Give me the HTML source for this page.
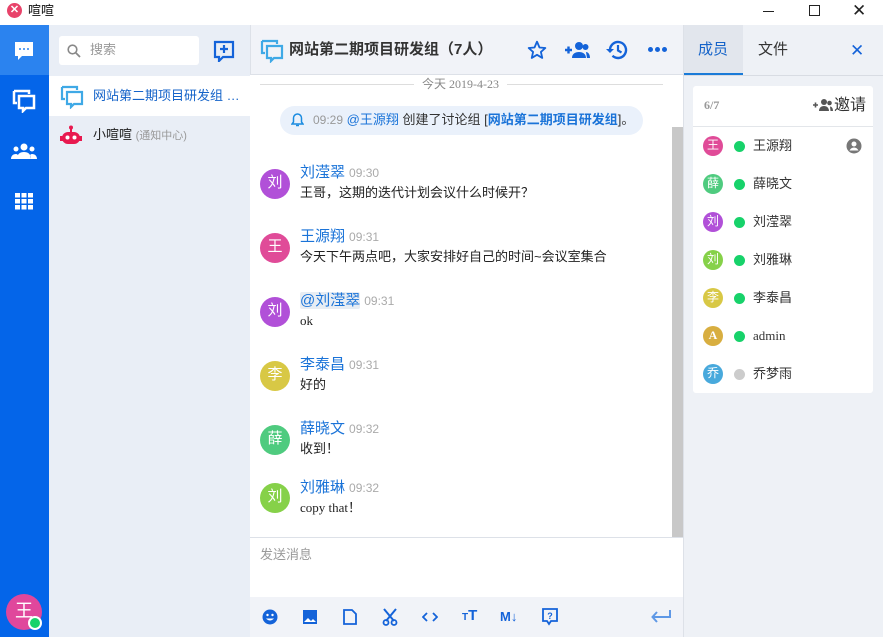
<!DOCTYPE html>
<html><head><meta charset="utf-8"><style>
*{margin:0;padding:0;box-sizing:border-box}
body{width:883px;height:637px;overflow:hidden;font-family:"Liberation Sans","Noto Sans CJK SC",sans-serif;font-size:13px;color:#333;background:#fff;position:relative}
.a{position:absolute}
.av{position:absolute;width:30px;height:30px;border-radius:50%;color:#fff;text-align:center;line-height:28px;font-size:15px}
.nm{position:absolute;left:300px;color:#1a73d8;font-size:15px;line-height:18px}
.tm{color:#aaa;font-size:12px;margin-left:4px}
.tx{position:absolute;left:300px;font-size:13px;color:#222;line-height:16px}
.mem{position:absolute;left:703px;height:20px;width:170px}
.mem .c{position:absolute;left:0;top:0;width:20px;height:20px;border-radius:50%;color:#fff;font-size:12px;text-align:center;line-height:19px}
.mem .d{position:absolute;left:31px;top:5px;width:11px;height:11px;border-radius:50%;background:#17d26a}
.mem .n{position:absolute;left:50px;top:2px;font-size:13px;color:#333;line-height:16px}
</style></head><body>
<div class="a" style="left:0;top:0;width:883px;height:25px;background:#fff"></div>
<div class="a" style="left:7px;top:3px;width:15px;height:15px;border-radius:50%;background:#e8436a;color:#fff;font-size:11px;line-height:15px;text-align:center;font-weight:bold">✕</div>
<div class="a" style="left:28px;top:3px;font-size:13px;color:#111;line-height:15px">喧喧</div>
<div class="a" style="left:763px;top:11px;width:11px;height:1px;background:#222"></div>
<div class="a" style="left:809px;top:5px;width:11px;height:11px;border:1px solid #222"></div>
<div class="a" style="left:852px;top:1px;font-size:17px;color:#222;line-height:19px">✕</div>
<div class="a" style="left:0;top:25px;width:49px;height:612px;background:#0465e9"></div>
<div class="a" style="left:0;top:25px;width:49px;height:50px;background:#2b83ef"></div>
<svg class="a" style="left:13px;top:40px" width="22" height="22" viewBox="0 0 22 22"><path d="M2 2h18v14H9l-4 4v-4H2z" fill="#fff"/><circle cx="7" cy="9" r="1" fill="#2b83ef"/><circle cx="11" cy="9" r="1" fill="#2b83ef"/><circle cx="15" cy="9" r="1" fill="#2b83ef"/></svg>
<svg class="a" style="left:12px;top:89px" width="24" height="24" viewBox="0 0 24 24"><path d="M2 2h15v3" fill="none" stroke="#fff" stroke-width="2.5"/><path d="M2 2v12h3" fill="none" stroke="#fff" stroke-width="2.5"/><path d="M7 7h15v12h-8l-3 3v-3H7z" fill="none" stroke="#fff" stroke-width="2.5"/></svg>
<svg class="a" style="left:11px;top:142px" width="26" height="18" viewBox="0 0 26 18"><circle cx="13" cy="5" r="3.5" fill="#fff"/><circle cx="5" cy="7" r="2.5" fill="#fff"/><circle cx="21" cy="7" r="2.5" fill="#fff"/><path d="M6 17c0-5 3-7 7-7s7 2 7 7z M0 17c0-3 2-5 5-5 1 0 2 1 2 1l-1 4z M26 17c0-3-2-5-5-5-1 0-2 1-2 1l1 4z" fill="#fff"/></svg>
<svg class="a" style="left:15px;top:193px" width="18" height="17" viewBox="0 0 18 17"><g fill="#fff"><rect x="0" y="0" width="5" height="4.5"/><rect x="6.5" y="0" width="5" height="4.5"/><rect x="13" y="0" width="5" height="4.5"/><rect x="0" y="6" width="5" height="4.5"/><rect x="6.5" y="6" width="5" height="4.5"/><rect x="13" y="6" width="5" height="4.5"/><rect x="0" y="12" width="5" height="4.5"/><rect x="6.5" y="12" width="5" height="4.5"/><rect x="13" y="12" width="5" height="4.5"/></g></svg>
<div class="a" style="left:6px;top:594px;width:36px;height:36px;border-radius:50%;background:#e0479c;color:#fff;font-size:18px;text-align:center;line-height:34px">王</div>
<div class="a" style="left:28px;top:616px;width:14px;height:14px;border-radius:50%;background:#17d26a;border:2px solid #fff"></div>
<div class="a" style="left:49px;top:25px;width:201px;height:612px;background:#e9eef6"></div>
<div class="a" style="left:59px;top:36px;width:140px;height:29px;background:#fff;border-radius:3px"></div>
<svg class="a" style="left:67px;top:44px" width="14" height="14" viewBox="0 0 14 14"><circle cx="5.5" cy="5.5" r="4.3" fill="none" stroke="#888" stroke-width="1.6"/><path d="M9 9l4 4" stroke="#888" stroke-width="1.8"/></svg>
<div class="a" style="left:90px;top:42px;color:#999;font-size:13px;line-height:16px">搜索</div>
<svg class="a" style="left:213px;top:40px" width="22" height="22" viewBox="0 0 22 22"><path d="M2 2h18v15H10l-4 4v-4H2z" fill="none" stroke="#1463d9" stroke-width="2.2"/><path d="M11 5v8M7 9h8" stroke="#1463d9" stroke-width="2.2"/></svg>
<div class="a" style="left:49px;top:76px;width:201px;height:40px;background:#fff"></div>
<svg class="a" style="left:60px;top:85px" width="24" height="24" viewBox="0 0 24 24"><path d="M2 2h15v3M2 2v12h3" fill="none" stroke="#3fa9e6" stroke-width="2.2"/><path d="M7 7h15v12h-8l-3 3v-3H7z" fill="none" stroke="#3fa9e6" stroke-width="2.2"/></svg>
<div class="a" style="left:93px;top:88px;color:#1463c9;font-size:13px;line-height:16px">网站第二期项目研发组 …</div>
<svg class="a" style="left:60px;top:125px" width="22" height="22" viewBox="0 0 22 22"><circle cx="11" cy="2.5" r="2" fill="#e8194f"/><rect x="10" y="3" width="2" height="4" fill="#e8194f"/><rect x="2" y="7" width="18" height="12" rx="6" fill="#e8194f"/><rect x="0" y="11" width="3" height="5" fill="#e8194f"/><rect x="19" y="11" width="3" height="5" fill="#e8194f"/><circle cx="7.5" cy="12.5" r="2" fill="#fff"/><circle cx="14.5" cy="12.5" r="2" fill="#fff"/></svg>
<div class="a" style="left:93px;top:127px;font-size:13px;color:#222;line-height:16px">小喧喧 <span style="font-size:11px;color:#999">(通知中心)</span></div>
<div class="a" style="left:250px;top:25px;width:433px;height:50px;background:#f1f3f8;border-bottom:1px solid #dde1e8;border-left:1px solid #dde1e8"></div>
<svg class="a" style="left:260px;top:39px" width="24" height="24" viewBox="0 0 24 24"><path d="M2 2h15v3M2 2v12h3" fill="none" stroke="#3fa9e6" stroke-width="2.2"/><path d="M7 7h15v12h-8l-3 3v-3H7z" fill="none" stroke="#3fa9e6" stroke-width="2.2"/></svg>
<div class="a" style="left:289px;top:41px;font-size:15px;font-weight:bold;color:#333;line-height:18px">网站第二期项目研发组（7人）</div>
<svg class="a" style="left:527px;top:40px" width="20" height="20" viewBox="0 0 24 24"><path d="M12 2l3 7 7 .6-5.3 4.7 1.6 7.2L12 17.8 5.7 21.5l1.6-7.2L2 9.6 9 9z" fill="none" stroke="#1463d9" stroke-width="2.2" stroke-linejoin="round"/></svg>
<svg class="a" style="left:564px;top:41px" width="26" height="18" viewBox="0 0 26 18"><path d="M1 9h7M4.5 5.5v7" stroke="#1463d9" stroke-width="2.4"/><circle cx="15" cy="5" r="4" fill="#1463d9"/><circle cx="21.5" cy="6" r="3" fill="#1463d9"/><path d="M8 17c0-4 3-6 7-6s7 2 7 6z M22 11c2 0 4 2 4 6h-3z" fill="#1463d9"/></svg>
<svg class="a" style="left:605px;top:39px" width="24" height="22" viewBox="0 0 24 22"><path d="M5 11a8 8 0 1 1 2.5 5.8" fill="none" stroke="#1463d9" stroke-width="2.4"/><path d="M1 10l4 4 4-4z" fill="#1463d9"/><path d="M13 6v5.5l3.5 2" fill="none" stroke="#1463d9" stroke-width="2.2"/></svg>
<div class="a" style="left:648px;top:47px;width:5px;height:5px;border-radius:50%;background:#1463d9;box-shadow:7px 0 #1463d9,14px 0 #1463d9"></div>
<div class="a" style="left:260px;top:84px;width:403px;height:1px;background:#ddd"></div>
<div class="a" style="left:414px;top:77px;padding:0 8px;background:#fff;color:#888;font-size:12px;line-height:15px;font-family:'Liberation Serif','Noto Sans CJK SC',serif">今天 2019-4-23</div>
<div class="a" style="left:280px;top:106px;width:363px;height:29px;border-radius:15px;background:#eaf1fb"></div>
<svg class="a" style="left:291px;top:113px" width="13" height="14" viewBox="0 0 13 14"><path d="M6.5 1a4 4 0 0 1 4 4v4l1.5 2H1L2.5 9V5a4 4 0 0 1 4-4z" fill="none" stroke="#1a8be0" stroke-width="1.5"/><path d="M5 12.5h3" stroke="#1a8be0" stroke-width="1.5"/></svg>
<div class="a" style="left:313px;top:112px;font-size:13px;color:#333;line-height:16px"><span style="color:#999;font-size:12px">09:29</span> <span style="color:#1a73d8">@王源翔</span> 创建了讨论组 [<b style="color:#1a73d8">网站第二期项目研发组</b>]。</div>
<div class="a" style="left:672px;top:127px;width:11px;height:410px;background:#c8c8c8"></div>

<div class="av" style="left:260px;top:169px;background:#b150d8">刘</div>
<div class="nm" style="top:164px">刘滢翠<span class="tm">09:30</span></div>
<div class="tx" style="top:185px">王哥，这期的迭代计划会议什么时候开？</div>
<div class="av" style="left:260px;top:233px;background:#e04b98">王</div>
<div class="nm" style="top:228px">王源翔<span class="tm">09:31</span></div>
<div class="tx" style="top:249px">今天下午两点吧，大家安排好自己的时间~会议室集合</div>
<div class="av" style="left:260px;top:297px;background:#b150d8">刘</div>
<div class="nm" style="top:292px"><span style="background:#e8edf3;border-radius:2px">@刘滢翠</span><span class="tm">09:31</span></div>
<div class="tx" style="top:313px;font-family:'Liberation Serif',serif">ok</div>
<div class="av" style="left:260px;top:361px;background:#d8c845">李</div>
<div class="nm" style="top:356px">李泰昌<span class="tm">09:31</span></div>
<div class="tx" style="top:377px">好的</div>
<div class="av" style="left:260px;top:425px;background:#4fcb7f">薛</div>
<div class="nm" style="top:420px">薛晓文<span class="tm">09:32</span></div>
<div class="tx" style="top:441px">收到！</div>
<div class="av" style="left:260px;top:483px;background:#86d149">刘</div>
<div class="nm" style="top:479px">刘雅琳<span class="tm">09:32</span></div>
<div class="tx" style="top:500px;font-family:'Liberation Serif','Noto Sans CJK SC',serif">copy that！</div>
<div class="a" style="left:250px;top:537px;width:433px;height:1px;background:#dde1e8"></div>
<div class="a" style="left:260px;top:547px;color:#999;font-size:13px;line-height:16px">发送消息</div>
<div class="a" style="left:250px;top:597px;width:433px;height:40px;background:#f1f3f8"></div>
<svg class="a" style="left:262px;top:609px" width="16" height="16" viewBox="0 0 16 16"><circle cx="8" cy="8" r="7.5" fill="#1463d9"/><circle cx="5.5" cy="6" r="1.2" fill="#fff"/><circle cx="10.5" cy="6" r="1.2" fill="#fff"/><path d="M4 9.5q4 4 8 0z" fill="#fff"/></svg>
<svg class="a" style="left:303px;top:610px" width="14" height="14" viewBox="0 0 14 14"><rect width="14" height="14" fill="#1463d9"/><path d="M1 12l4-4 3 3 2-2 3 3z" fill="#fff"/></svg>
<svg class="a" style="left:343px;top:609px" width="14" height="16" viewBox="0 0 14 16"><path d="M1 1h8l4 4v10H1z" fill="none" stroke="#1463d9" stroke-width="1.8"/></svg>
<svg class="a" style="left:382px;top:608px" width="16" height="18" viewBox="0 0 16 18"><path d="M2 1l10 12M14 1L4 13" stroke="#1463d9" stroke-width="2"/><circle cx="4" cy="14.5" r="2.5" fill="none" stroke="#1463d9" stroke-width="1.8"/><circle cx="12" cy="14.5" r="2.5" fill="none" stroke="#1463d9" stroke-width="1.8"/></svg>
<svg class="a" style="left:422px;top:611px" width="16" height="12" viewBox="0 0 16 12"><path d="M5 2L1 6l4 4M11 2l4 4-4 4" fill="none" stroke="#1463d9" stroke-width="1.8"/></svg>
<div class="a" style="left:462px;top:607px;color:#1463d9;font-weight:bold;font-size:15px;line-height:18px"><span style="font-size:10px">T</span>T</div>
<div class="a" style="left:500px;top:609px;color:#1463d9;font-weight:bold;font-size:13px;line-height:16px">M↓</div>
<svg class="a" style="left:542px;top:608px" width="16" height="18" viewBox="0 0 16 18"><path d="M1 1h14v12H9l-2 3-2-3H1z" fill="none" stroke="#1463d9" stroke-width="1.8"/><text x="8" y="11" font-size="9" text-anchor="middle" fill="#1463d9" font-family="Liberation Sans" font-weight="bold">?</text></svg>
<svg class="a" style="left:651px;top:609px" width="20" height="14" viewBox="0 0 20 14"><path d="M19 1v7H2M6 3L1.5 8 6 13" fill="none" stroke="#5e98e6" stroke-width="2"/></svg>
<div class="a" style="left:683px;top:25px;width:200px;height:612px;background:#eef1f6;border-left:1px solid #dde1e8"></div>
<div class="a" style="left:683px;top:75px;width:200px;height:1px;background:#d8dce3"></div>
<div class="a" style="left:684px;top:25px;width:59px;height:50px;background:#e2e6ed;border-bottom:2px solid #1a7bd8"></div>
<div class="a" style="left:698px;top:41px;color:#1463c9;font-size:15px;line-height:18px">成员</div>
<div class="a" style="left:758px;top:41px;color:#333;font-size:15px;line-height:18px">文件</div>
<div class="a" style="left:850px;top:41px;color:#1463d9;font-size:17px;line-height:19px">✕</div>
<div class="a" style="left:693px;top:86px;width:180px;height:307px;background:#fff;border-radius:3px"></div>
<div class="a" style="left:693px;top:126px;width:180px;height:1px;background:#e3e6ea"></div>
<div class="a" style="left:704px;top:98px;color:#999;font-size:12px;line-height:15px;font-family:'Liberation Serif',serif;font-weight:bold">6/7</div>
<svg class="a" style="left:813px;top:98px" width="20" height="14" viewBox="0 0 20 14"><path d="M0 7h5M2.5 4.5v5" stroke="#555" stroke-width="1.6"/><circle cx="11" cy="4" r="3" fill="#555"/><circle cx="16.5" cy="5" r="2.3" fill="#555"/><path d="M6 13c0-3 2-5 5-5s5 2 5 5zM17 8.5c1.5 0 3 1.5 3 4.5h-2.5z" fill="#555"/></svg>
<div class="a" style="left:834px;top:96px;font-size:16px;color:#333;line-height:19px">邀请</div>
<div class="mem" style="top:136px"><div class="c" style="background:#e04b98">王</div><div class="d"></div><div class="n">王源翔</div></div>
<svg class="a" style="left:846px;top:138px" width="16" height="16" viewBox="0 0 16 16"><circle cx="8" cy="8" r="7.5" fill="#777"/><circle cx="8" cy="6" r="2.5" fill="#fff"/><path d="M3.5 12.5c1-2 2.5-3 4.5-3s3.5 1 4.5 3" fill="#fff"/></svg>
<div class="mem" style="top:174px"><div class="c" style="background:#4fcb7f">薛</div><div class="d"></div><div class="n">薛晓文</div></div>
<div class="mem" style="top:212px"><div class="c" style="background:#b150d8">刘</div><div class="d"></div><div class="n">刘滢翠</div></div>
<div class="mem" style="top:250px"><div class="c" style="background:#86d149">刘</div><div class="d"></div><div class="n">刘雅琳</div></div>
<div class="mem" style="top:288px"><div class="c" style="background:#d8c845">李</div><div class="d"></div><div class="n">李泰昌</div></div>
<div class="mem" style="top:326px"><div class="c" style="background:#d8ae40;font-family:'Liberation Serif',serif;font-weight:bold">A</div><div class="d"></div><div class="n" style="font-family:'Liberation Serif',serif">admin</div></div>
<div class="mem" style="top:364px"><div class="c" style="background:#48a9dc">乔</div><div class="d" style="background:#ccc"></div><div class="n">乔梦雨</div></div>
</body></html>
